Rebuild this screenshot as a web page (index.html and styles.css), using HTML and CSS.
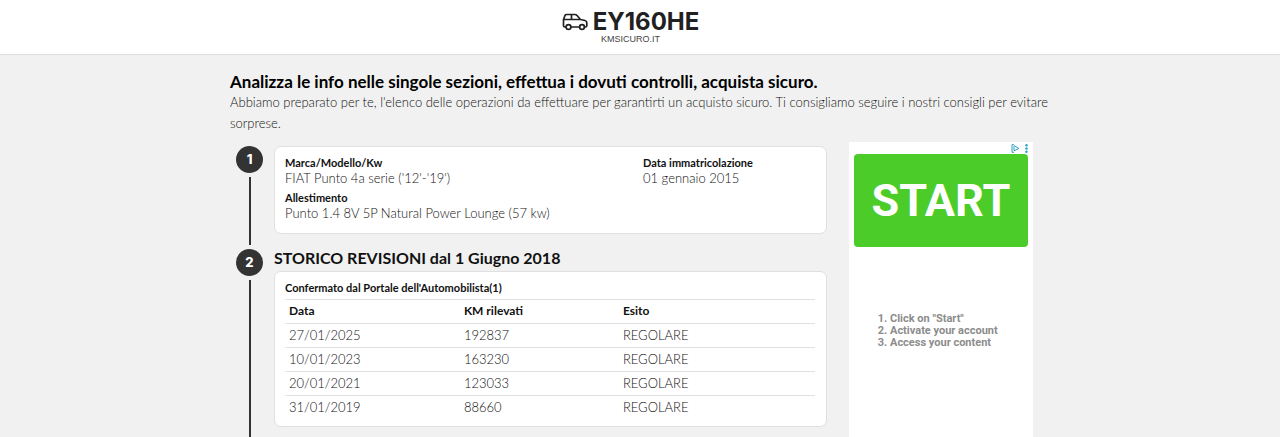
FILE: index.html
```html
<!DOCTYPE html>
<html lang="it">
<head>
  <meta charset="UTF-8">
  <meta name="viewport" content="width=device-width, initial-scale=1.0">
  <title>EY160HE - KMSICURO.IT</title>
  <link rel="stylesheet" href="styles.css">
</head>
<body>
  <header class="header">
    <div class="plate">
      <svg class="car" viewBox="0 0 26 18" fill="none" stroke="currentColor" stroke-width="1.7" stroke-linecap="round" stroke-linejoin="round">
        <path d="M4 14H3Q1.500 14 1.500 12.500V6.500L3 2.500Q3.500 1.500 4.500 1.500H13Q14 1.500 14.800 2.300L18.500 6.500L23 7.500Q24.800 8 24.800 10V12.500Q24.800 14 23.500 14H22.500M9 14H17.500M1.500 6.500H18.500M9.500 1.500V6.500"/>
        <circle cx="6.500" cy="14" r="2.400"/>
        <circle cx="20" cy="14" r="2.400"/>
      </svg>
      <span>EY160HE</span>
    </div>
    <div class="site">KMSICURO.IT</div>
  </header>

  <main class="container">
    <h1 class="title">Analizza le info nelle singole sezioni, effettua i dovuti controlli, acquista sicuro.</h1>
    <p class="intro">Abbiamo preparato per te, l'elenco delle operazioni da effettuare per garantirti un acquisto sicuro. Ti consigliamo seguire i nostri consigli per evitare sorprese.</p>

    <div class="content">
      <div class="timeline">
        <section class="step">
          <div class="marker"><span class="number">1</span></div>
          <div class="step-body">
            <dl class="card details">
              <div>
                <dt>Marca/Modello/Kw</dt>
                <dd>FIAT Punto 4a serie ('12'-'19')</dd>
              </div>
              <div>
                <dt>Data immatricolazione</dt>
                <dd>01 gennaio 2015</dd>
              </div>
              <div>
                <dt>Allestimento</dt>
                <dd>Punto 1.4 8V 5P Natural Power Lounge (57 kw)</dd>
              </div>
            </dl>
          </div>
        </section>

        <section class="step">
          <div class="marker"><span class="number">2</span></div>
          <div class="step-body">
            <h2 class="step-title">STORICO REVISIONI dal 1 Giugno 2018</h2>
            <div class="card history">
              <table>
                <caption>Confermato dal Portale dell'Automobilista(1)</caption>
                <thead>
                  <tr><th class="col-date">Data</th><th class="col-km">KM rilevati</th><th>Esito</th></tr>
                </thead>
                <tbody>
                  <tr><td>27/01/2025</td><td>192837</td><td>REGOLARE</td></tr>
                  <tr><td>10/01/2023</td><td>163230</td><td>REGOLARE</td></tr>
                  <tr><td>20/01/2021</td><td>123033</td><td>REGOLARE</td></tr>
                  <tr><td>31/01/2019</td><td>88660</td><td>REGOLARE</td></tr>
                </tbody>
              </table>
            </div>
          </div>
        </section>
      </div>

      <aside class="ad">
        <div class="ad-bar">
          <svg class="ad-choices" viewBox="0 0 9 9" fill="none" stroke="currentColor">
            <path d="M3 .7H1v7.600h2M3 2.300v4.400l5-2.200-5-2.900"/>
          </svg>
          <svg class="ad-menu" viewBox="0 0 3 9" fill="currentColor">
            <circle cx="1.500" cy="1.300" r="1.200"/>
            <circle cx="1.500" cy="4.500" r="1.200"/>
            <circle cx="1.500" cy="7.700" r="1.200"/>
          </svg>
        </div>
        <a class="ad-button" href="#">START</a>
        <ol class="ad-steps">
          <li>Click on "Start"</li>
          <li>Activate your account</li>
          <li>Access your content</li>
        </ol>
      </aside>
    </div>
  </main>
</body>
</html>
```
FILE: styles.css
```css
* {
  box-sizing: border-box;
}

html {
  overflow: hidden;
}

body {
  margin: 0;
  min-height: 100vh;
  display: flex;
  flex-direction: column;
  background-color: #f1f1f1;
  color: #111;
  font-family: Lato, sans-serif;
  font-size: 13px;
  font-weight: 300;
}

.header {
  padding: 10px 19px 9px 0;
  background: #fff;
  border-bottom: 1px solid #dedede;
  color: #212121;
  text-align: center;
}

.plate {
  display: flex;
  justify-content: center;
  align-items: center;
  gap: 5px;
  font-family: Inter, sans-serif;
  font-size: 24px;
  line-height: 23px;
  font-weight: 700;
}

.car {
  width: 26px;
  height: 18px;
}

.site {
  font-family: "Liberation Sans", Arial, sans-serif;
  font-size: 9px;
  line-height: 12px;
  font-weight: 400;
  color: #444;
}

.container {
  flex: 1;
  display: flex;
  flex-direction: column;
  width: 100%;
  max-width: 820px;
  margin: 0 auto;
  padding-top: 16px;
}

.title {
  margin: 0;
  color: #000;
  font-size: 17px;
  line-height: 21px;
  font-weight: 700;
}

.intro {
  margin: 0 0 8px;
  line-height: 21px;
}

.content {
  flex: 1;
  display: flex;
  gap: 22px;
  padding-right: 17px;
}

.timeline {
  flex: 1;
  display: flex;
  flex-direction: column;
  padding-top: 4px;
}

.step {
  display: flex;
  gap: 11px;
}

.step:last-child {
  flex: 1;
}

.marker {
  display: flex;
  flex-direction: column;
  align-items: center;
  gap: 4px;
  padding: 0 0 4px 6px;
}

.step:last-child .marker {
  padding-bottom: 0;
}

.marker::after {
  content: "";
  flex: 1;
  width: 2px;
  background: #333;
}

.number {
  width: 27px;
  height: 27px;
  border-radius: 50%;
  background: #333;
  color: #fff;
  font-family: Inter, sans-serif;
  font-size: 13px;
  line-height: 27px;
  font-weight: 800;
  text-align: center;
}

.step-body {
  flex: 1;
  padding-bottom: 15px;
}

.step:last-child .step-body {
  padding-bottom: 10px;
}

.step-title {
  margin: 0 0 4px;
  font-size: 16px;
  line-height: 18px;
  font-weight: 700;
}

.card {
  background: #fff;
  border: 1px solid #e0e0e0;
  border-radius: 7px;
}

.details {
  display: grid;
  grid-template-columns: 2fr 1fr;
  gap: 4px 12px;
  margin: 0;
  padding: 8px 10px 12px;
}

.details dt {
  font-size: 11px;
  line-height: 15px;
  font-weight: 700;
}

.details dd {
  margin: 0;
  line-height: 16px;
}

.history {
  padding: 8px 11px 6px 10px;
}

table {
  width: 100%;
  border-collapse: collapse;
}

caption {
  padding-bottom: 3px;
  font-size: 11px;
  line-height: 16px;
  font-weight: 700;
  text-align: left;
}

th,
td {
  height: 24px;
  padding: 0 4px 2px;
  border-top: 1px solid #dee2e6;
  text-align: left;
}

th {
  font-size: 12px;
  font-weight: 700;
}

.col-date {
  width: 33%;
}

.col-km {
  width: 30%;
}

.ad {
  width: 184px;
  padding: 0 5px;
  background: #fff;
}

.ad-bar {
  display: flex;
  justify-content: flex-end;
  align-items: center;
  gap: 5px;
  height: 12px;
  color: #2a9fc0;
}

.ad-choices {
  width: 9px;
  height: 9px;
}

.ad-menu {
  width: 3px;
  height: 9px;
}

.ad-button {
  display: block;
  border-radius: 4px;
  background: #4ccc28;
  color: #fff;
  font-family: Roboto, sans-serif;
  font-size: 45px;
  line-height: 93px;
  font-weight: 700;
  text-align: center;
  text-decoration: none;
}

.ad-steps {
  margin: 66px 0 0;
  padding-left: 36px;
  color: #8c8c8c;
  font-family: Roboto, sans-serif;
  font-size: 11px;
  line-height: 12px;
  font-weight: 700;
}
```
